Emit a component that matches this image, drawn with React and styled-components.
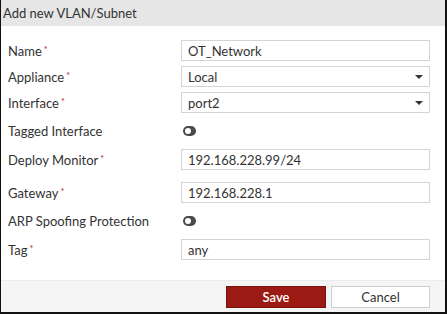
import React from "react";
import styled, { createGlobalStyle } from "styled-components";

const GlobalStyle = createGlobalStyle`
  html, body {
    margin: 0;
    padding: 0;
    background: #fff;
  }
  * {
    box-sizing: border-box;
  }
`;

const Frame = styled.div`
  width: 447px;
  height: 314px;
  display: flex;
  flex-direction: column;
  border-left: 1px solid #111;
  border-right: 2px solid #111;
  border-bottom: 2px solid #111;
  background: #fff;
  font-family: Lato, "Open Sans", sans-serif;
  font-size: 13px;
  color: #333;
`;

const Header = styled.div`
  height: 26px;
  line-height: 26px;
  padding-left: 2px;
  background: #e6e6e6;
  color: #333;
  font-size: 13px;
`;

const Body = styled.div`
  flex: 1;
  padding: 14px 15px 0 7px;
  display: flex;
  flex-direction: column;
`;

const Row = styled.div`
  display: grid;
  grid-template-columns: 173px 1fr;
  align-items: center;
  height: ${({ $height }) => $height || 21}px;
  margin-bottom: ${({ $spacing }) => $spacing || 5}px;
`;

const Label = styled.label`
  color: #333;
  white-space: nowrap;
`;

const Required = styled.span`
  color: #b01c1c;
  font-size: 9px;
  vertical-align: 3px;
  margin-left: 2px;
`;

const Input = styled.div`
  height: 21px;
  border: 1px solid #d4d4d4;
  padding: 0 6px;
  display: flex;
  align-items: center;
  justify-content: space-between;
  color: #333;
  background: #fff;
`;

const Caret = styled.span`
  width: 0;
  height: 0;
  border-left: 4px solid transparent;
  border-right: 4px solid transparent;
  border-top: 4px solid #333;
  margin-right: 0px;
`;

const Toggle = styled.span`
  position: relative;
  display: inline-block;
  width: 13px;
  height: 10px;
  border-radius: 5px;
  background: #4a4a4a;
  margin-left: 2px;
  &::after {
    content: "";
    position: absolute;
    top: 2px;
    left: 2px;
    width: 6px;
    height: 6px;
    border-radius: 50%;
    background: #fff;
  }
`;

const Footer = styled.div`
  height: 32px;
  background: #f5f5f5;
  border-top: 1px solid #ececec;
  display: flex;
  justify-content: flex-end;
  align-items: center;
  gap: 5px;
  padding-right: 15px;
`;

const Button = styled.button`
  height: 22px;
  width: ${({ $width }) => $width}px;
  padding: 0;
  font-family: Lato, "Open Sans", sans-serif;
  font-size: 13px;
  cursor: pointer;
`;

const SaveButton = styled(Button)`
  background: #9b1b14;
  border: 1px solid #7a130e;
  color: #fff;
  font-weight: 600;
`;

const CancelButton = styled(Button)`
  background: #fff;
  border: 1px solid #cfcfcf;
  color: #333;
`;

const fields = [
  { label: "Name", required: true, value: "OT_Network" },
  { label: "Appliance", required: true, value: "Local", select: true },
  { label: "Interface", required: true, value: "port2", select: true },
  { label: "Tagged Interface", toggle: true, height: 26 },
  { label: "Deploy Monitor", required: true, value: "192.168.228.99/24", spacing: 12 },
  { label: "Gateway", required: true, value: "192.168.228.1" },
  { label: "ARP Spoofing Protection", toggle: true, height: 26 },
  { label: "Tag", required: true, value: "any" },
];

export default function App() {
  return (
    <>
      <GlobalStyle />
      <Frame>
        <Header>Add new VLAN/Subnet</Header>
        <Body>
          {fields.map((f) => (
            <Row key={f.label} $height={f.height} $spacing={f.spacing}>
              <Label>
                {f.label}
                {f.required && <Required>*</Required>}
              </Label>
              {f.toggle ? (
                <div>
                  <Toggle />
                </div>
              ) : (
                <Input>
                  <span>{f.value}</span>
                  {f.select && <Caret />}
                </Input>
              )}
            </Row>
          ))}
        </Body>
        <Footer>
          <SaveButton $width={100}>Save</SaveButton>
          <CancelButton $width={99}>Cancel</CancelButton>
        </Footer>
      </Frame>
    </>
  );
}
